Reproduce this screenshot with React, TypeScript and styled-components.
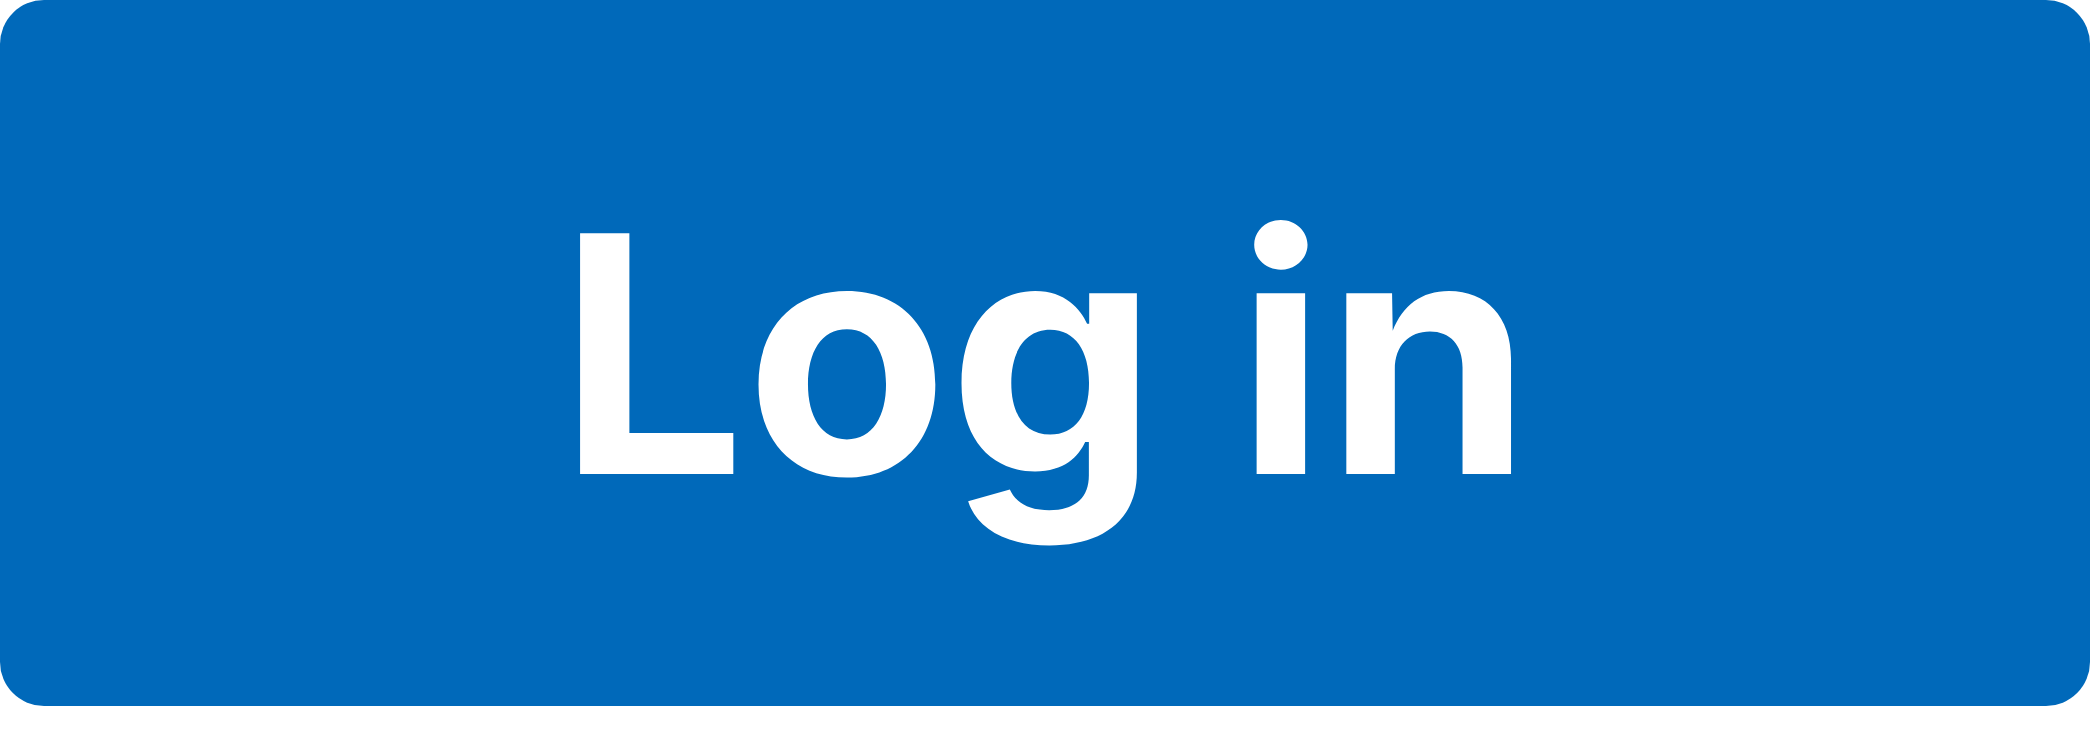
import React from "react";
import styled, { createGlobalStyle } from "styled-components";

const GlobalStyle = createGlobalStyle`
  html, body {
    margin: 0;
    padding: 0;
    background: #ffffff;
  }
  * { box-sizing: border-box; }
`;

const Page = styled.div`
  width: 2090px;
  height: 750px;
  display: flex;
  flex-direction: column;
  align-items: stretch;
`;

const LoginButton = styled.button`
  width: 2090px;
  height: 706px;
  margin: 0;
  padding: 0;
  border: none;
  border-radius: 44px;
  background: #0069ba;
  color: #ffffff;
  font-family: Inter, "Noto Sans", sans-serif;
  font-weight: 700;
  font-size: 331px;
  line-height: normal;
  display: flex;
  align-items: center;
  justify-content: center;
  cursor: pointer;
`;

export default function App() {
  return (
    <>
      <GlobalStyle />
      <Page>
        <LoginButton type="button">Log in</LoginButton>
      </Page>
    </>
  );
}
